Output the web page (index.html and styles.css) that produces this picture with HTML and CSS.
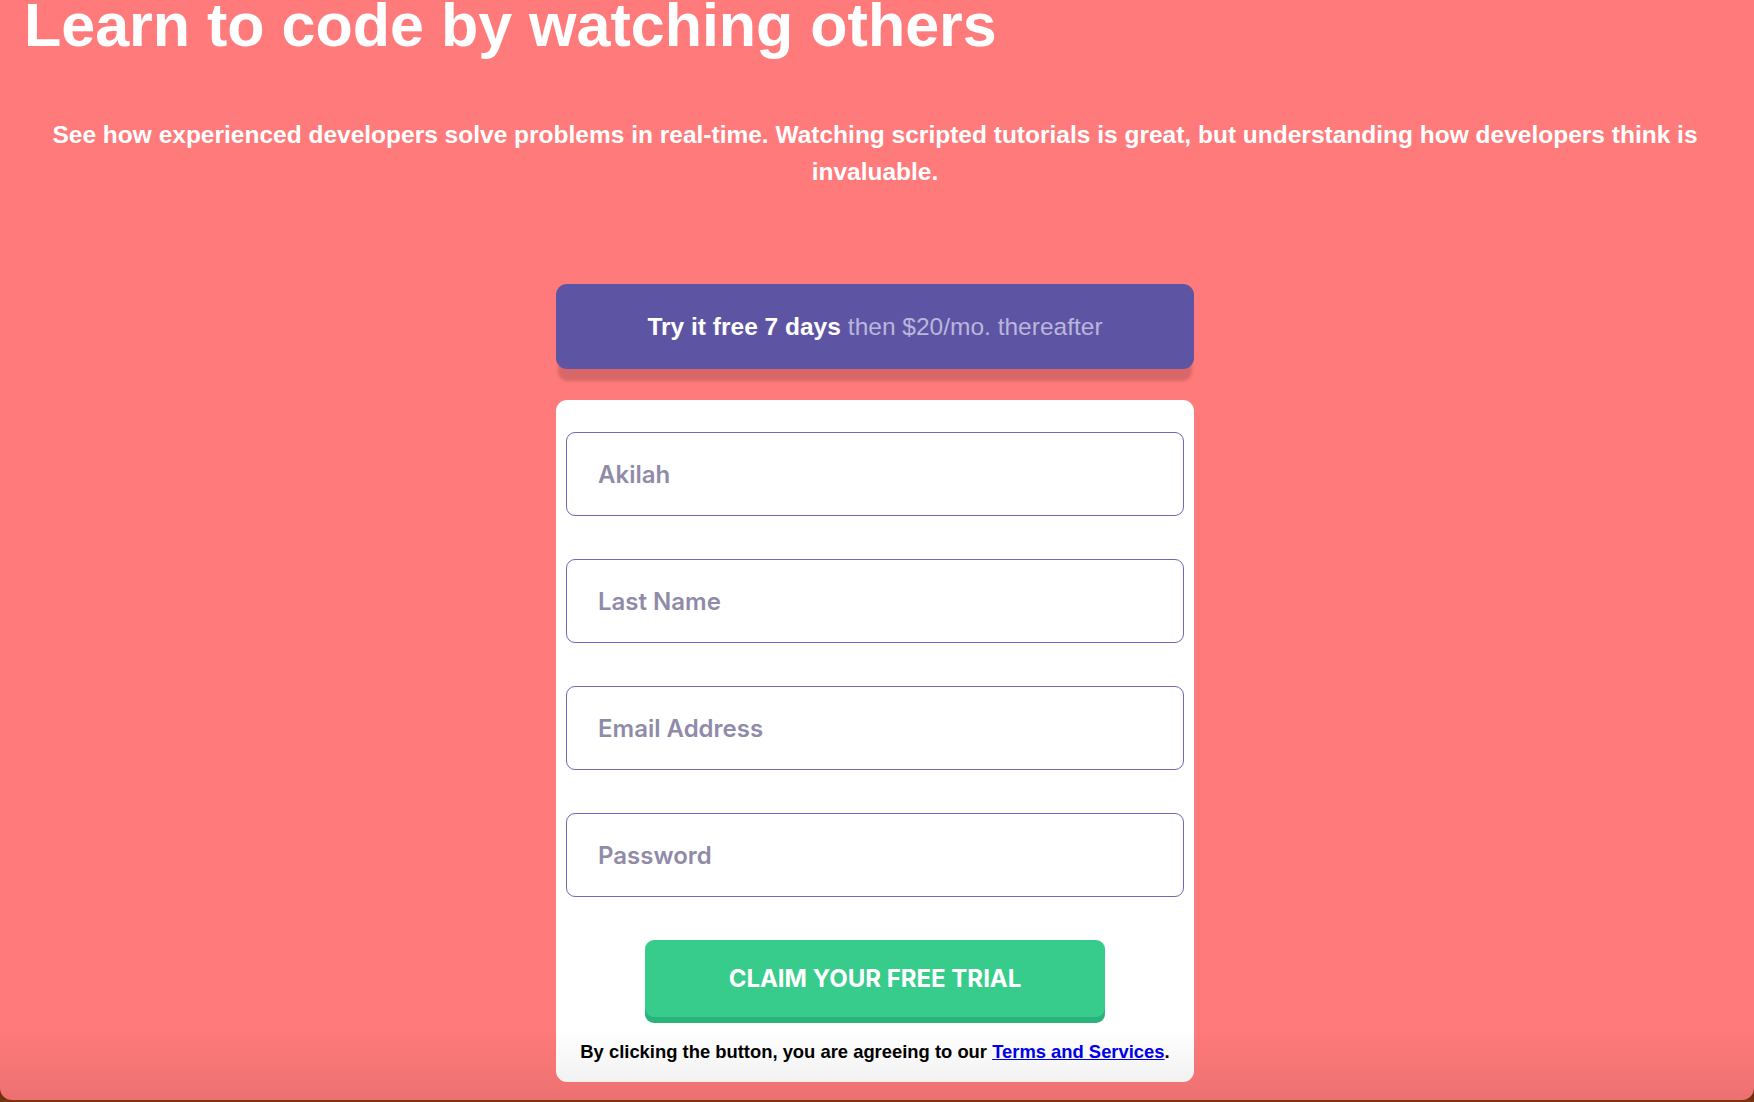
FILE: index.html
```html
<!DOCTYPE html>
<html lang="en">
<head>
<meta charset="utf-8">
<title>Learn to code by watching others</title>
<link rel="stylesheet" href="styles.css">
</head>
<body>
<main class="page">
  <header class="intro">
    <h1 class="intro-title">Learn to code by watching others</h1>
    <p class="intro-text">See how experienced developers solve problems in real-time. Watching scripted tutorials is great, but understanding how developers think is invaluable.</p>
  </header>
  <section class="signup">
    <div class="offer"><strong>Try it free 7 days</strong> <span class="offer-rest">then $20/mo. thereafter</span></div>
    <form class="card">
      <input class="field" type="text" placeholder="Akilah">
      <input class="field" type="text" placeholder="Last Name">
      <input class="field" type="email" placeholder="Email Address">
      <input class="field" type="password" placeholder="Password">
      <button class="cta" type="button">CLAIM YOUR FREE TRIAL</button>
      <p class="terms">By clicking the button, you are agreeing to our <a href="#">Terms and Services</a>.</p>
    </form>
  </section>
</main>
</body>
</html>
```
FILE: styles.css
```css
* { box-sizing: border-box; }
html {
  background: #7a3410;
  height: 100%;
}
body {
  margin: 0;
  height: 1100px;
  overflow: hidden;
  background: #ff7a7a;
  border-radius: 0 0 12px 12px;
  font-family: "Liberation Sans", Arial, Helvetica, sans-serif;
  color: #fff;
}
body::after {
  content: "";
  position: fixed;
  left: 0;
  right: 0;
  bottom: 2px;
  height: 70px;
  background: linear-gradient(rgba(0,0,0,0), rgba(0,0,0,0.07));
  pointer-events: none;
}
.page {
  padding: 0 28px 0 24px;
}
.intro-title {
  margin: -5px 0 0;
  font-size: 61px;
  line-height: 61px;
  font-weight: 700;
}
.intro-text {
  margin: 60px 0 0;
  text-align: center;
  font-size: 24.5px;
  line-height: 37px;
  font-weight: 700;
}
.signup {
  width: 638px;
  margin: 94px auto 0;
}
.offer {
  height: 85px;
  background: #5e54a4;
  border-radius: 11px;
  box-shadow: 0 14px 3px -2px rgba(0,0,0,0.15);
  display: flex;
  align-items: center;
  justify-content: center;
  gap: 7px;
  font-size: 24.5px;
}
.offer strong { font-weight: 700; }
.offer-rest { color: #bab6dc; }
.card {
  margin-top: 31px;
  background: #fff;
  border-radius: 11px;
  padding: 32px 10px 19px;
  display: flex;
  flex-direction: column;
  align-items: center;
  gap: 43px;
}
.field {
  width: 100%;
  height: 84px;
  border: 1px solid #7068ba;
  border-radius: 9px;
  padding: 0 31px;
  font-family: Inter, "Noto Sans", sans-serif;
  font-size: 24px;
  font-weight: 600;
  color: #3d3b48;
  outline: none;
}
.field::placeholder { color: #8f8ba8; opacity: 1; }
.cta {
  width: 460px;
  height: 77px;
  border: 0;
  border-radius: 9px;
  background: #38cc8c;
  box-shadow: 0 6px 0 #2ab37a;
  color: #fff;
  font-family: Inter, "Noto Sans", sans-serif;
  font-size: 24px;
  font-weight: 700;
  margin-bottom: -19px;
}
.terms {
  margin: 0;
  color: #000;
  font-size: 18.4px;
  font-weight: 700;
  text-align: center;
}
.terms a { color: #0000ee; }
```
